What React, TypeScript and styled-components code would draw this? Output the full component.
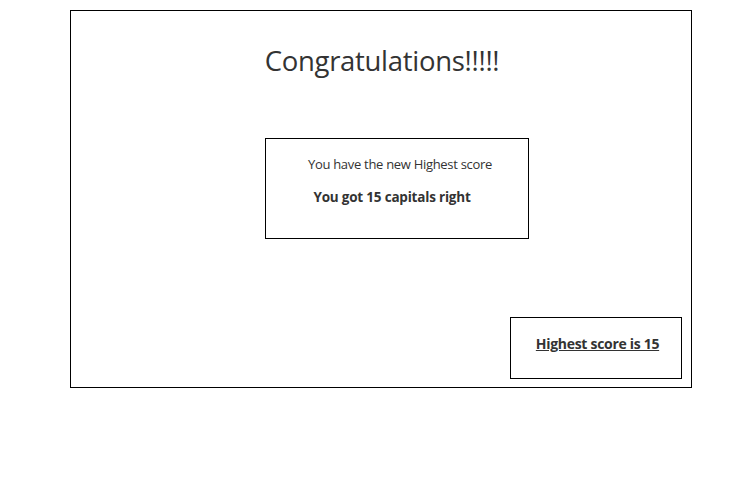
import styled, { createGlobalStyle } from "styled-components";

const GlobalStyle = createGlobalStyle`
  * {
    box-sizing: border-box;
  }
  body {
    margin: 0;
    background: #fff;
    font-family: "Open Sans", "Liberation Sans", sans-serif;
    color: #333;
  }
`;

const Page = styled.div`
  padding: 10px 0 0 70px;
`;

const Card = styled.div`
  width: 622px;
  height: 378px;
  border: 1px solid #000;
  display: flex;
  flex-direction: column;
`;

const Title = styled.h1`
  margin: 34px 0 0;
  padding-left: 2px;
  text-align: center;
  font-size: 27.5px;
  font-weight: 400;
  line-height: 32px;
  letter-spacing: -0.3px;
  color: #333;
`;

const ResultBox = styled.div`
  margin: 61px 0 0 194px;
  width: 264px;
  height: 101px;
  border: 1px solid #000;
  padding-top: 15px;
`;

const Line = styled.p<{ $bold?: boolean; $shift: number }>`
  margin: 0;
  text-align: center;
  font-size: ${(p) => (p.$bold ? "13.5px" : "13px")};
  font-weight: ${(p) => (p.$bold ? 700 : 400)};
  line-height: 20px;
  letter-spacing: ${(p) => (p.$bold ? "-0.2px" : "-0.3px")};
  & + & {
    margin-top: 13px;
  }
  padding-left: ${(p) => (p.$shift > 0 ? p.$shift * 2 : 0)}px;
  padding-right: ${(p) => (p.$shift < 0 ? -p.$shift * 2 : 0)}px;
`;

const Footer = styled.div`
  margin-top: auto;
  display: flex;
  justify-content: flex-end;
  padding: 0 9px 8px 0;
`;

const HighScore = styled.div`
  width: 172px;
  height: 62px;
  border: 1px solid #000;
  display: flex;
  justify-content: center;
  padding: 16px 0 0 3px;
  font-size: 14px;
  line-height: 20px;
  font-weight: 700;
  letter-spacing: -0.3px;
  text-decoration: underline;
`;

export default function App() {
  return (
    <>
      <GlobalStyle />
      <Page>
        <Card>
          <Title>Congratulations!!!!!</Title>
          <ResultBox>
            <Line $shift={3}>You have the new Highest score</Line>
            <Line $bold $shift={-5}>
              You got 15 capitals right
            </Line>
          </ResultBox>
          <Footer>
            <HighScore>Highest score is 15</HighScore>
          </Footer>
        </Card>
      </Page>
    </>
  );
}
